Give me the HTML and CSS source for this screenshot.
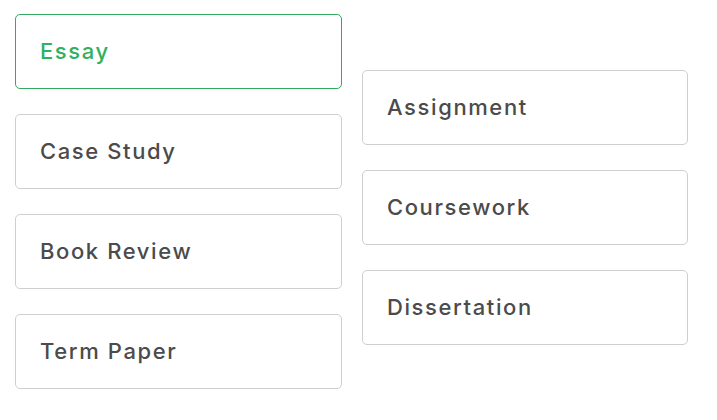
FILE: index.html
```html
<!DOCTYPE html>
<html>
<head>
<meta charset="utf-8">
<link rel="stylesheet" href="styles.css">
</head>
<body>
<div class="types">
  <div class="col">
    <div class="opt active">Essay</div>
    <div class="opt">Case Study</div>
    <div class="opt">Book Review</div>
    <div class="opt">Term Paper</div>
  </div>
  <div class="col col-right">
    <div class="opt">Assignment</div>
    <div class="opt">Coursework</div>
    <div class="opt">Dissertation</div>
  </div>
</div>
</body>
</html>
```
FILE: styles.css
```css
html, body {
  margin: 0;
  padding: 0;
  background: #ffffff;
}
.types {
  display: flex;
  gap: 20px;
  padding: 14px 15px;
  font-family: "Inter", "Liberation Sans", sans-serif;
}
.col {
  display: flex;
  flex-direction: column;
  gap: 25px;
  width: 327px;
}
.col-right {
  padding-top: 56px;
  width: 326px;
}
.opt {
  box-sizing: border-box;
  height: 75px;
  border: 1px solid #cfcfcf;
  border-radius: 5px;
  display: flex;
  align-items: center;
  padding-left: 24px;
  padding-bottom: 2px;
  font-size: 22px;
  font-weight: 500;
  letter-spacing: 1.6px;
  color: #4b4b4b;
}
.opt.active {
  border-color: #35a862;
  color: #2fb15f;
}
```
